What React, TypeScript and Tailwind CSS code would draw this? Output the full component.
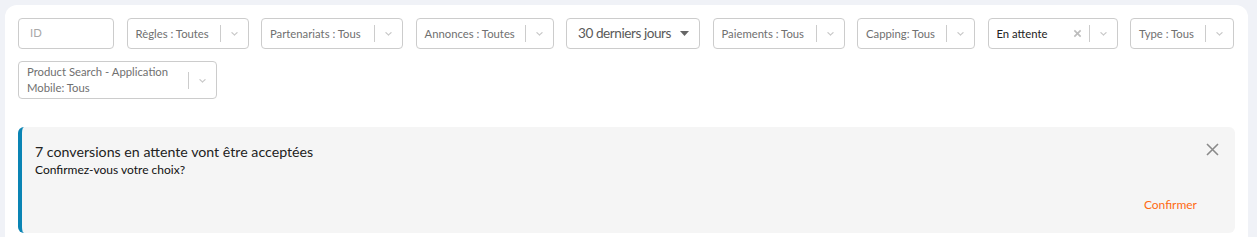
import React from 'react';

const Chevron = () => (
  <svg width="11" height="11" viewBox="0 0 20 20" className="text-[#c8c8c8]" fill="currentColor">
    <path d="M4.516 7.548c0.436-0.446 1.043-0.481 1.576 0l3.908 3.747 3.908-3.747c0.533-0.481 1.141-0.446 1.574 0 0.436 0.445 0.408 1.197 0 1.615-0.406 0.418-4.695 4.502-4.695 4.502-0.217 0.223-0.502 0.335-0.787 0.335s-0.57-0.112-0.789-0.335c0 0-4.287-4.084-4.695-4.502s-0.436-1.17 0-1.615z" />
  </svg>
);

const SelectBox = ({
  label,
  width,
  dark,
  clearable,
  tall,
}: {
  label: string;
  width: string;
  dark?: boolean;
  clearable?: boolean;
  tall?: boolean;
}) => (
  <div
    className={`flex items-center rounded border border-[#cccccc] bg-white ${width} ${tall ? 'h-[38px]' : 'h-[31px]'}`}
  >
    <div
      className={`flex-1 min-w-0 pl-[8px] pr-1 text-[11.3px] leading-[16px] ${tall ? '' : 'whitespace-nowrap'} ${dark ? 'text-[#222]' : 'text-[#707070]'}`}
    >
      {label}
    </div>
    {clearable && (
      <div className="px-[7px] text-[#bdbdbd]">
        <svg width="9" height="9" viewBox="0 0 10 10" stroke="currentColor" strokeWidth="1.8">
          <path d="M1.5 1.5 L8.5 8.5 M8.5 1.5 L1.5 8.5" />
        </svg>
      </div>
    )}
    <span className="h-[17px] w-px bg-[#cccccc]" />
    <div className="px-[8px] flex items-center">
      <Chevron />
    </div>
  </div>
);

const App = () => {
  const filters = [
    { label: 'Règles : Toutes', width: 'w-[122px]' },
    { label: 'Partenariats : Tous', width: 'w-[142px]' },
    { label: 'Annonces : Toutes', width: 'w-[138px]' },
  ];
  const filtersAfter = [
    { label: 'Paiements : Tous', width: 'w-[132px]' },
    { label: 'Capping: Tous', width: 'w-[118px]' },
  ];

  return (
    <div className="min-h-[237px] bg-[#f0f2f7] px-[5px] pt-[5px] font-['Lato',sans-serif] overflow-hidden">
      <div className="w-[1243px] rounded-t-[12px] bg-white px-[13px] pt-[13px] pb-[6px] min-h-[240px]">
        <div className="flex flex-wrap gap-x-[12.5px] gap-y-[12px] w-[1230px]">
          <div className="flex h-[31px] w-[96px] items-center rounded border border-[#cccccc] bg-white pl-[11px] text-[11.3px] text-[#a8a8a8]">
            ID
          </div>
          {filters.map((f) => (
            <SelectBox key={f.label} label={f.label} width={f.width} />
          ))}
          <div className="flex h-[31px] w-[134px] items-center justify-between rounded border border-[#cccccc] bg-white pl-[11px] pr-[10px] text-[13.6px] tracking-[-0.45px] whitespace-nowrap text-[#5a5a5a]">
            <span>30 derniers jours</span>
            <svg width="9" height="5" viewBox="0 0 9 5" className="text-[#666]" fill="currentColor">
              <path d="M0 0 H9 L4.5 5 Z" />
            </svg>
          </div>
          {filtersAfter.map((f) => (
            <SelectBox key={f.label} label={f.label} width={f.width} />
          ))}
          <SelectBox label="En attente" width="w-[130px]" dark clearable />
          <SelectBox label="Type : Tous" width="w-[104px]" />
          <SelectBox label="Product Search - Application Mobile: Tous" width="w-[199px]" tall />
        </div>

        <div className="mt-[28px] flex h-[106px] rounded-[6px] border-l-[4px] border-[#0a84b4] bg-[#f5f5f5]">
          <div className="flex flex-1 flex-col pl-[13px] pr-[16px] pt-[15px]">
            <div className="flex items-start justify-between">
              <div>
                <div className="text-[14.2px] leading-[19px] text-[#222]">7 conversions en attente vont être acceptées</div>
                <div className="text-[12px] leading-[17px] text-[#111]">Confirmez-vous votre choix?</div>
              </div>
              <button type="button" className="mt-[1px] text-[#8a8a8a]">
                <svg width="13" height="13" viewBox="0 0 13 13" stroke="currentColor" strokeWidth="1.6">
                  <path d="M1 1 L12 12 M12 1 L1 12" />
                </svg>
              </button>
            </div>
            <div className="mt-auto mb-[19px] flex justify-end pr-[22px]">
              <button type="button" className="text-[12px] text-[#ff6a13]">
                Confirmer
              </button>
            </div>
          </div>
        </div>
      </div>
    </div>
  );
};

export default App;
